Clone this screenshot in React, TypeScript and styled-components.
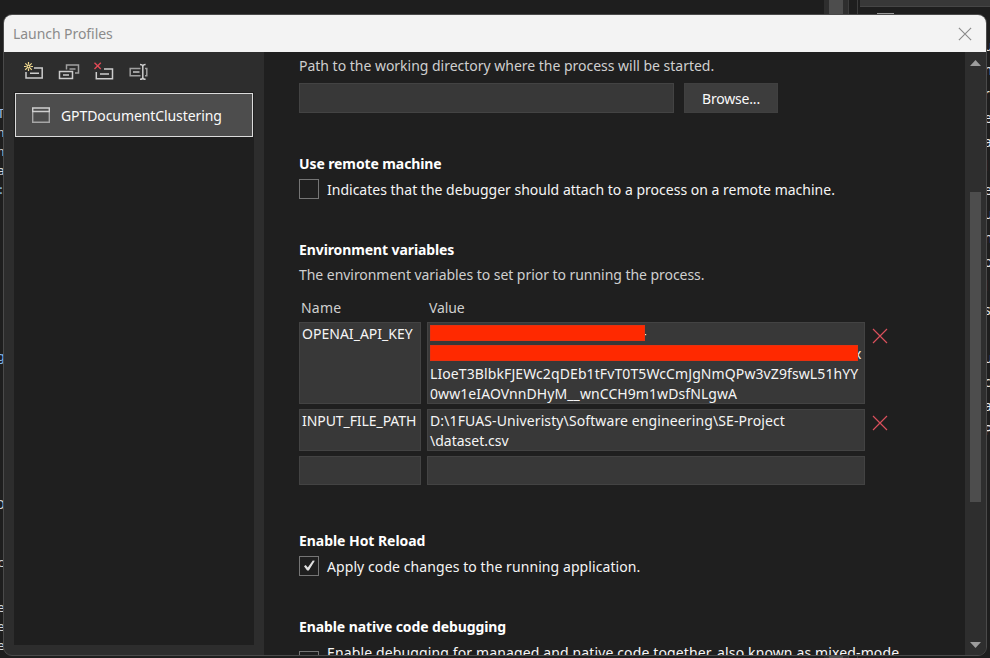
import React from "react";
import styled, { createGlobalStyle } from "styled-components";

const GlobalStyle = createGlobalStyle`
  *, *::before, *::after { box-sizing: border-box; }
  html, body { margin: 0; padding: 0; background: #1e1e1e; overflow: hidden; }
  body { font-family: "Noto Sans", "Open Sans", sans-serif; font-size: 14px; line-height: 20px; color: #f5f5f5; }
`;

/* ---------- editor window behind the dialog ---------- */

const Screen = styled.div`
  position: relative;
  width: 990px;
  height: 658px;
  overflow: hidden;
  background: #1e1e1e;
`;

const Backdrop = styled.div`
  position: absolute;
  inset: 0;
  display: flex;
  justify-content: space-between;
`;

const CodeEdge = styled.div`
  width: 6px;
  padding-top: 104px;
  overflow: hidden;
  font-family: "DejaVu Sans Mono", monospace;
  font-size: 13px;
`;

const CodeGlyph = styled.div<{ $gap?: number; $color?: string }>`
  height: 19px;
  line-height: 19px;
  margin-top: ${(p) => p.$gap ?? 0}px;
  margin-left: -3px;
  color: ${(p) => p.$color ?? "#d4d4d4"};
`;

const Explorer = styled.div`
  display: flex;
  width: 166px;
`;

const EditorScroll = styled.div`
  flex: none;
  width: 25px;
  padding-left: 5px;
  background: #2e2e2e;
  border-right: 1px solid #3d3d3d;
`;

const EditorThumb = styled.div`
  width: 14px;
  height: 100%;
  background: #4d4d4d;
`;

const ExplorerPane = styled.div`
  flex: 1;
  min-width: 0;
  margin-left: 8px;
  border-left: 1px solid #3d3d3d;
  padding-left: 2px;
`;

const SearchBox = styled.div`
  height: 7px;
  background: #383838;
  border-bottom: 1px solid #464646;
`;

const ToolStub = styled.div`
  width: 17px;
  height: 2px;
  margin: 6px 0 0 17px;
  background: #9a9a9a;
`;

const ExplorerText = styled.div`
  margin: 19px 0 0 124px;
  line-height: 24px;
  color: #e6e6e6;
`;

const ExplorerGlyph = styled.div`
  height: 24px;
`;

/* ---------- dialog ---------- */

const Dialog = styled.div`
  position: relative;
  width: 984px;
  height: 642px;
  margin: 14px 0 0 3px;
  display: flex;
  flex-direction: column;
  border: 1px solid #4a4a4a;
  border-radius: 9px;
  background: #2d2d2d;
  overflow: hidden;
`;

const TitleBar = styled.div`
  flex: none;
  height: 37px;
  display: flex;
  align-items: center;
  justify-content: space-between;
  padding: 0 14px 0 9px;
  background: #f3f3f3;
  color: #8b8b8b;
  letter-spacing: -0.06px;
`;

const Body = styled.div`
  flex: 1;
  min-height: 0;
  display: flex;
`;

const Sidebar = styled.div`
  width: 260px;
  padding: 8px 10px 10px;
  display: flex;
  flex-direction: column;
`;

const Toolbar = styled.div`
  display: flex;
  gap: 13px;
  height: 32px;
  padding-left: 9px;
`;

const ProfileList = styled.div`
  flex: 1;
  padding: 1px;
  background: #1f1f1f;
`;

const ProfileItem = styled.div`
  height: 44px;
  display: flex;
  align-items: center;
  gap: 10px;
  padding-left: 15px;
  background: #4d4d4d;
  border: 1px solid #dcdcdc;
  color: #fafafa;
  letter-spacing: -0.09px;
`;

const ProfileName = styled.span`
  padding-top: 2px;
`;

const Content = styled.div`
  flex: 1;
  min-width: 0;
  padding: 4px 0 0 35px;
  background: #1f1f1f;
  overflow: hidden;
`;

const ScrollBar = styled.div`
  width: 21px;
  padding: 8px 5px 7px;
  display: flex;
  flex-direction: column;
  justify-content: space-between;
  background: #2e2e2e;
`;

const Track = styled.div`
  flex: 1;
  padding-top: 126px;
`;

const Thumb = styled.div`
  width: 11px;
  height: 310px;
  background: #4d4d4d;
`;

const Text = styled.div<{ $ls?: number; $muted?: boolean }>`
  white-space: nowrap;
  letter-spacing: ${(p) => p.$ls ?? 0}px;
  color: ${(p) => (p.$muted ? "#cfcfcf" : "#f5f5f5")};
`;

const Heading = styled.div<{ $ls?: number }>`
  font-weight: 700;
  white-space: nowrap;
  color: #fff;
  letter-spacing: ${(p) => p.$ls ?? 0}px;
`;

const Group = styled.section<{ $gap: number }>`
  margin-top: ${(p) => p.$gap}px;
`;

const PathRow = styled.div`
  display: flex;
  gap: 10px;
  margin-top: 7px;
`;

const PathField = styled.div`
  width: 375px;
  height: 30px;
  background: #383838;
  border: 1px solid #434343;
`;

const BrowseButton = styled.button`
  width: 94px;
  height: 30px;
  padding: 2px 0 0 0;
  font: inherit;
  letter-spacing: -0.18px;
  color: #fafafa;
  background: #3d3d3d;
  border: 1px solid #404040;
`;

const CheckRow = styled.div`
  display: flex;
  gap: 8px;
  margin-top: 5px;
  line-height: 22px;
  height: 20px;
`;

const CheckBox = styled.div<{ $drop?: number }>`
  flex: none;
  width: 20px;
  height: 20px;
  margin-top: ${(p) => p.$drop ?? 0}px;
  border: 1px solid #757575;
  background: #1f1f1f;
`;

const Table = styled.div`
  display: grid;
  grid-template-columns: 122px 438px 16px;
  column-gap: 6px;
  row-gap: 5px;
  margin-top: 4px;
`;

const TableHead = styled.div`
  display: grid;
  grid-template-columns: 122px 438px;
  column-gap: 6px;
  margin-top: 13px;
  padding-left: 2px;
`;

const Cell = styled.div<{ $h: number; $ls?: number }>`
  position: relative;
  height: ${(p) => p.$h}px;
  padding: 1px 0 0 2px;
  background: #383838;
  border: 1px solid #434343;
  white-space: pre;
  letter-spacing: ${(p) => p.$ls ?? 0}px;
`;

const CellLine = styled.div<{ $indent?: number; $ls?: number }>`
  height: 20px;
  padding-left: ${(p) => p.$indent ?? 0}px;
  letter-spacing: ${(p) => p.$ls ?? 0}px;
`;

const Redaction = styled.div<{ $top: number; $w: number }>`
  position: absolute;
  left: 2px;
  top: ${(p) => p.$top}px;
  width: ${(p) => p.$w}px;
  height: 16px;
  background: #ff2900;
  border: 1px solid #e8300f;
`;

const RemoveButton = styled.div`
  padding: 6px 0 0 1px;
  line-height: 0;
  width: 18px;
`;

/* ---------- icons ---------- */

const Cross = ({ size, color, w = 1.2 }: { size: number; color: string; w?: number }) => (
  <svg width={size} height={size} viewBox="0 0 16 16" fill="none" stroke={color} strokeWidth={w}>
    <path d="M1 1 15 15M15 1 1 15" />
  </svg>
);

const Tool = ({ children }: { children: React.ReactNode }) => (
  <svg width="22" height="22" viewBox="0 0 22 22" fill="none" stroke="#cccccc" strokeWidth="1.5">
    {children}
  </svg>
);

const NewIcon = () => (
  <Tool>
    <path d="M3 12v6h16.2V8H11" />
    <path d="M7 13.2h9" />
    <g stroke="#ecd58c" strokeWidth="1.2">
      <path d="M5.5 2v2.5M5.5 8.5V11M1 6.5h2.5M7.5 6.5H10M2.3 3.3l1.8 1.8M7 8l1.8 1.8M8.7 3.3 6.9 5.1M4 8 2.2 9.8" />
      <circle cx="5.5" cy="6.5" r="1.4" />
    </g>
  </Tool>
);

const DuplicateIcon = () => (
  <Tool>
    <path d="M1.5 11.5h13v7h-13zM5 15h6" />
    <path stroke="#a0a0a0" d="M8.5 9.5V5h12v8h-3.5M11.5 9h6" />
  </Tool>
);

const DeleteIcon = () => (
  <Tool>
    <path d="M3.3 12v6.8h16.2V9H11" />
    <path d="M7 14h9" />
    <path stroke="#e04a56" strokeWidth="1.4" d="M1.5 2.8 7.8 9M7.8 2.8 1.5 9" />
  </Tool>
);

const RenameIcon = () => (
  <Tool>
    <path stroke="#a0a0a0" d="M12.5 8.5H2.2v7.2h10.3M17 8.5h1.8v7.2H17" />
    <path stroke="#a0a0a0" strokeWidth="2" d="M5 12.1h6.5" />
    <path d="M12 4.5c2 0 2.8.5 2.8 2v11c0 1.3-.8 1.8-2.8 1.8M17.6 4.5c-2 0-2.8.5-2.8 2M14.8 17.5c0 1.3.8 1.8 2.8 1.8" />
  </Tool>
);

const WindowIcon = () => (
  <svg width="20" height="18" viewBox="0 0 20 18" fill="none" strokeWidth="1.4">
    <path stroke="#a6a6a6" d="M1.7 5.5v10.8h16.6V5.5" />
    <path stroke="#cfcfcf" d="M1.7 5.5V2h16.6v3.5z" />
  </svg>
);

const CheckMark = () => (
  <svg width="18" height="18" viewBox="0 0 18 18">
    <path d="M4 9.3 5.7 8 7.8 10.6 12.8 3.4l2 .4-6 9.8H7.1z" fill="#e0e0e0" />
  </svg>
);

const Arrow = ({ down }: { down?: boolean }) => (
  <svg width="11" height="6" viewBox="0 0 11 6">
    <path d={down ? "M0 0h11L5.5 6z" : "M0 6h11L5.5 0z"} fill="#9c9c9c" />
  </svg>
);

const leftGlyphs: { t: string; gap?: number; c?: string }[] = [
  { t: "T", c: "#9cb8e0" },
  { t: "n" },
  { t: "n" },
  { t: "a" },
  { t: ":", c: "#8fb4d8" },
  { t: "g", gap: 148, c: "#7fb3e6" },
  { t: "D", gap: 129 },
  { t: "c", gap: 39 },
  { t: "e", gap: 26 },
  { t: "e" },
  { t: "e" },
];

const rightGlyphs = ["u", "m", "r", "e", "a", "l", "e", "u", "n", "o", "l", "s", "", "u", "c", "a", "P"];

export default function App() {
  return (
    <Screen>
      <GlobalStyle />
      <Backdrop>
        <CodeEdge>
          {leftGlyphs.map((g, i) => (
            <CodeGlyph key={i} $gap={g.gap} $color={g.c}>
              {g.t}
            </CodeGlyph>
          ))}
        </CodeEdge>
        <Explorer>
          <EditorScroll>
            <EditorThumb />
          </EditorScroll>
          <ExplorerPane>
            <SearchBox />
            <ToolStub />
            <ExplorerText>
              {rightGlyphs.map((g, i) => (
                <ExplorerGlyph key={i}>{g}</ExplorerGlyph>
              ))}
            </ExplorerText>
          </ExplorerPane>
        </Explorer>
      </Backdrop>

      <Dialog>
        <TitleBar>
          Launch Profiles
          <Cross size={14} color="#8a8a8a" w={1.3} />
        </TitleBar>
        <Body>
          <Sidebar>
            <Toolbar>
              <NewIcon />
              <DuplicateIcon />
              <DeleteIcon />
              <RenameIcon />
            </Toolbar>
            <ProfileList>
              <ProfileItem>
                <WindowIcon />
                <ProfileName>GPTDocumentClustering</ProfileName>
              </ProfileItem>
            </ProfileList>
          </Sidebar>

          <Content>
            <Text $muted $ls={-0.015}>Path to the working directory where the process will be started.</Text>
            <PathRow>
              <PathField />
              <BrowseButton>Browse...</BrowseButton>
            </PathRow>

            <Group $gap={41}>
              <Heading $ls={-0.1}>Use remote machine</Heading>
              <CheckRow>
                <CheckBox />
                <Text $ls={0.007}>Indicates that the debugger should attach to a process on a remote machine.</Text>
              </CheckRow>
            </Group>

            <Group $gap={41}>
              <Heading $ls={-0.1}>Environment variables</Heading>
              <Group $gap={5}>
                <Text $muted $ls={-0.045}>
                  The environment variables to set prior to running the process.
                </Text>
              </Group>
              <TableHead>
                <Text $muted $ls={0.2}>Name</Text>
                <Text $muted $ls={-0.1}>Value</Text>
              </TableHead>
              <Table>
                <Cell $h={82} $ls={0.02}>OPENAI_API_KEY</Cell>
                <Cell $h={82}>
                  <CellLine $indent={212}>-</CellLine>
                  <CellLine $indent={424}>x</CellLine>
                  <CellLine $ls={0.1}>LIoeT3BlbkFJEWc2qDEb1tFvT0T5WcCmJgNmQPw3vZ9fswL51hYY</CellLine>
                  <CellLine $ls={0.08}>0ww1eIAOVnnDHyM__wnCCH9m1wDsfNLgwA</CellLine>
                  <Redaction $top={2} $w={215} />
                  <Redaction $top={22} $w={428} />
                </Cell>
                <RemoveButton>
                  <Cross size={16} color="#d9505c" />
                </RemoveButton>

                <Cell $h={42} $ls={-0.07}>INPUT_FILE_PATH</Cell>
                <Cell $h={42}>
                  <CellLine $ls={0.11}>{"D:\\1FUAS-Univeristy\\Software engineering\\SE-Project"}</CellLine>
                  <CellLine>{"\\dataset.csv"}</CellLine>
                </Cell>
                <RemoveButton>
                  <Cross size={16} color="#d9505c" />
                </RemoveButton>

                <Cell $h={29} />
                <Cell $h={29} />
              </Table>
            </Group>

            <Group $gap={46}>
              <Heading $ls={-0.05}>Enable Hot Reload</Heading>
              <CheckRow>
                <CheckBox>
                  <CheckMark />
                </CheckBox>
                <Text $ls={0.08}>Apply code changes to the running application.</Text>
              </CheckRow>
            </Group>

            <Group $gap={41}>
              <Heading $ls={-0.1}>Enable native code debugging</Heading>
              <CheckRow>
                <CheckBox $drop={9} />
                <Text $ls={0.13}>
                  Enable debugging for managed and native code together, also known as mixed-mode
                </Text>
              </CheckRow>
            </Group>
          </Content>

          <ScrollBar>
            <Arrow />
            <Track>
              <Thumb />
            </Track>
            <Arrow down />
          </ScrollBar>
        </Body>
      </Dialog>
    </Screen>
  );
}
